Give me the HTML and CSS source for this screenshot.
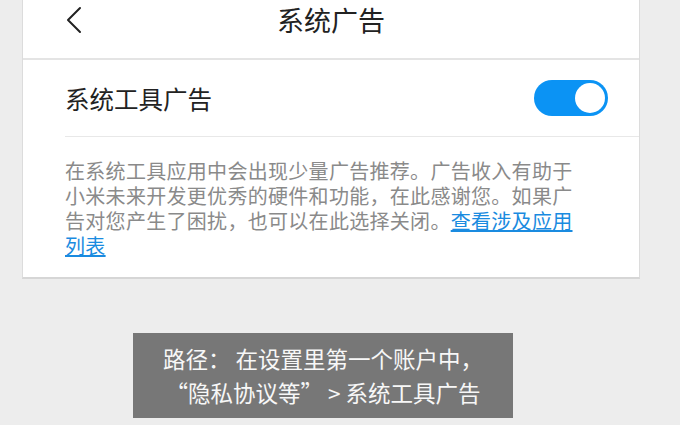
FILE: index.html
```html
<!DOCTYPE html>
<html lang="zh-CN">
<head>
    <meta charset="UTF-8">
    <meta name="viewport" content="width=device-width, initial-scale=1.0">
    <title>系统广告</title>
    <link rel="stylesheet" href="styles.css">
</head>
<body>
    <div class="card">
        <div class="header">
            <svg class="back" width="18" height="28" viewBox="0 0 18 28">
                <path d="M15 2 L3 14 L15 26" fill="none" stroke="#222" stroke-width="2" stroke-linecap="round" stroke-linejoin="round"/>
            </svg>
            <h2>系统广告</h2>
        </div>
        <div class="row">
            <span class="label">系统工具广告</span>
            <div class="toggle"><span class="knob"></span></div>
        </div>
        <p class="desc">在系统工具应用中会出现少量广告推荐。广告收入有助于小米未来开发更优秀的硬件和功能，在此感谢您。如果广告对您产生了困扰，也可以在此选择关闭。<a href="#">查看涉及应用列表</a></p>
    </div>

    <div class="caption">
        路径： 在设置里第一个账户中，<br>
        “隐私协议等” &gt; 系统工具广告
    </div>
</body>
</html>
```

FILE: styles.css
```css
body {
    margin: 0;
    background-color: #ededed;
    font-family: "Noto Sans CJK SC", "Noto Sans", sans-serif;
    width: 680px;
    height: 425px;
    overflow: hidden;
}

.card {
    margin-left: 22px;
    width: 616px;
    background: #fff;
    border-left: 1px solid #dcdcdc;
    border-right: 1px solid #dcdcdc;
    border-bottom: 2px solid #d6d6d6;
}

.header {
    position: relative;
    height: 58px;
    border-bottom: 2px solid #e4e4e4;
}

.back {
    position: absolute;
    left: 42px;
    top: 6px;
}

.header h2 {
    margin: 0;
    padding-top: 3px;
    text-align: center;
    font-size: 27px;
    font-weight: normal;
    line-height: 34px;
    color: #222;
}

.row {
    margin-left: 42px;
    height: 76px;
    padding-right: 31px;
    display: flex;
    align-items: center;
    justify-content: space-between;
    border-bottom: 1px solid #e8e8e8;
}

.label {
    font-size: 24.5px;
    color: #222;
}

.toggle {
    width: 74px;
    height: 36px;
    border-radius: 18px;
    background-color: #0b93f4;
    display: flex;
    align-items: center;
    justify-content: flex-end;
    padding-right: 3px;
    box-sizing: border-box;
}

.knob {
    width: 30px;
    height: 30px;
    border-radius: 50%;
    background: #fff;
}

.desc {
    margin: 0 0 0 42px;
    padding: 21px 0 19px;
    width: 515px;
    font-size: 20px;
    letter-spacing: 0.3px;
    line-height: 25px;
    color: #8a8a8a;
}

.desc a {
    color: #1a8be0;
    text-decoration: underline;
}

.caption {
    margin: 54px 0 0 133px;
    width: 380px;
    height: 85px;
    padding: 8px 0;
    box-sizing: border-box;
    background-color: #777;
    color: #f7f7f7;
    text-align: center;
    font-size: 22.5px;
    line-height: 34px;
}
```
